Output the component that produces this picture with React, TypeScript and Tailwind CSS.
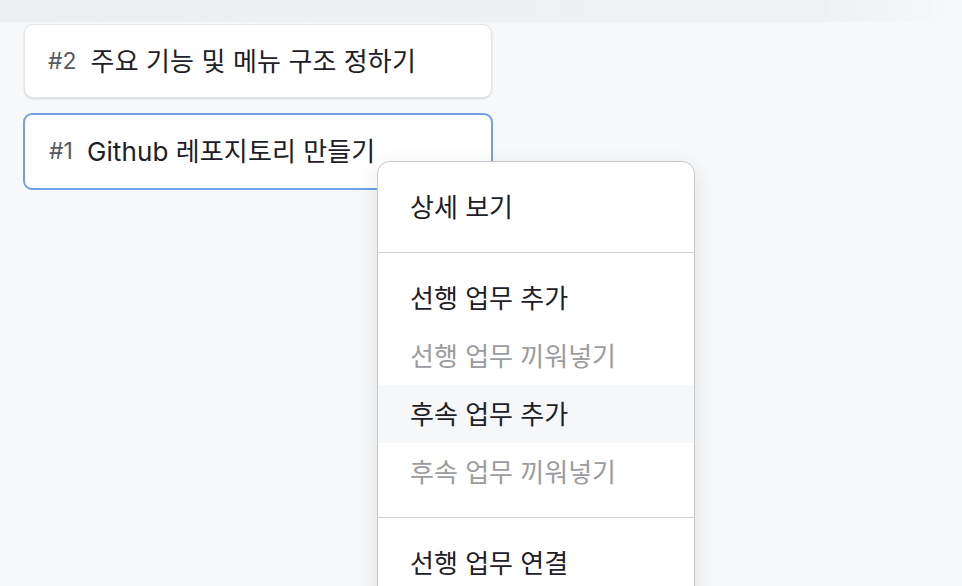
const font = "font-['Inter','Noto_Sans_CJK_KR',sans-serif]";

const tasks = [
  { id: 2, title: "주요 기능 및 메뉴 구조 정하기", selected: false },
  { id: 1, title: "Github 레포지토리 만들기", selected: true },
];

const menuSections: Array<Array<{ label: string; disabled?: boolean; active?: boolean }>> = [
  [{ label: "상세 보기" }],
  [
    { label: "선행 업무 추가" },
    { label: "선행 업무 끼워넣기", disabled: true },
    { label: "후속 업무 추가", active: true },
    { label: "후속 업무 끼워넣기", disabled: true },
  ],
  [{ label: "선행 업무 연결" }],
];

export default function App() {
  return (
    <div className={`relative w-[962px] h-[586px] overflow-hidden bg-[#f7f8fa] ${font}`}>
      <div className="h-[22px] bg-gradient-to-r from-[#eeeff1] via-[#f0f1f3] via-85% to-[#f7f8fa]" />
      <div className="flex flex-col gap-[15px] pl-[23px] pt-[2px] w-[493px]">
        {tasks.map((task) => (
          <div
            key={task.id}
            className={`flex items-center gap-[14px] rounded-[9px] bg-white ${
              task.selected
                ? "h-[77px] px-[24px] border-2 border-[#72a0e4]"
                : "mx-px h-[74px] px-[23px] border border-[#e3e5e8] shadow-[0_1px_2px_rgba(0,0,0,0.14)]"
            }`}
          >
            <span className="text-[23px] text-[#555a60]">#{task.id}</span>
            <span className="text-[26px] text-[#1d2026] tracking-[0.1px]">{task.title}</span>
          </div>
        ))}
      </div>

      <div className="absolute left-[377px] top-[161px] w-[318px] rounded-[13px] border border-[#c9c9cb] bg-white shadow-[0_6px_24px_rgba(0,0,0,0.09)]">
        {menuSections.map((section, i) => (
          <div
            key={i}
            className={`py-[16px] ${i > 0 ? "border-t border-[#d2d2d4]" : ""}`}
          >
            {section.map((item) => (
              <div
                key={item.label}
                className={`flex items-center h-[58px] px-[32px] text-[26px] ${
                  item.disabled ? "text-[#9a9ca0]" : "text-[#1d2026]"
                } ${item.active ? "bg-[#f6f7f9]" : ""}`}
              >
                {item.label}
              </div>
            ))}
          </div>
        ))}
      </div>
    </div>
  );
}
